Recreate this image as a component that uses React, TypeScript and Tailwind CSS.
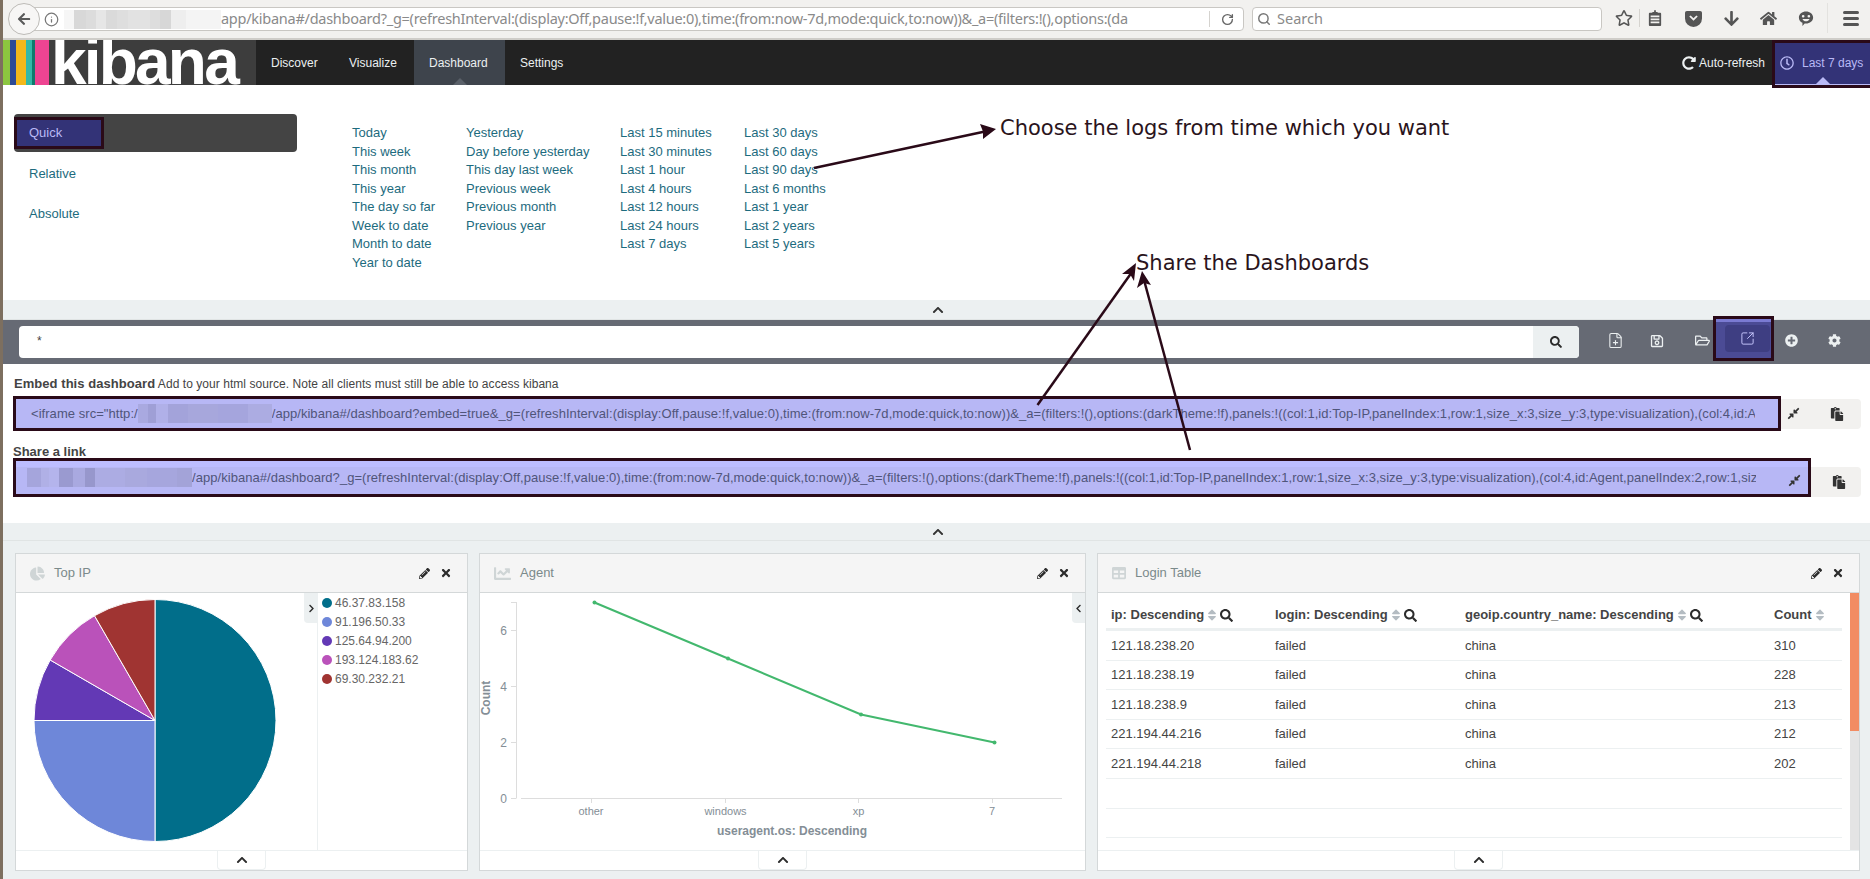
import React from "react";
import {
  FaArrowDown,
  FaArrowLeft,
  FaChartLine,
  FaChartPie,
  FaChevronLeft,
  FaChevronRight,
  FaChevronUp,
  FaCog,
  FaCompressAlt,
  FaHome,
  FaPaste,
  FaPencilAlt,
  FaPlusCircle,
  FaRedoAlt,
  FaRegClock,
  FaRegFolderOpen,
  FaRegSave,
  FaRegStar,
  FaSearch,
  FaSort,
  FaTable,
  FaTimes,
} from "react-icons/fa";
import { FilePlus, Info, RotateCw, Search, SquareArrowOutUpRight } from "lucide-react";

const timeColumns = [
  {
    width: "w-[114px]",
    items: ["Today", "This week", "This month", "This year", "The day so far", "Week to date", "Month to date", "Year to date"],
  },
  {
    width: "w-[154px]",
    items: ["Yesterday", "Day before yesterday", "This day last week", "Previous week", "Previous month", "Previous year"],
  },
  {
    width: "w-[124px]",
    items: ["Last 15 minutes", "Last 30 minutes", "Last 1 hour", "Last 4 hours", "Last 12 hours", "Last 24 hours", "Last 7 days"],
  },
  {
    width: "w-[124px]",
    items: ["Last 30 days", "Last 60 days", "Last 90 days", "Last 6 months", "Last 1 year", "Last 2 years", "Last 5 years"],
  },
];

const legend = [
  { label: "46.37.83.158", color: "bg-[#016e8a]" },
  { label: "91.196.50.33", color: "bg-[#6e87d9]" },
  { label: "125.64.94.200", color: "bg-[#6339b5]" },
  { label: "193.124.183.62", color: "bg-[#ba52ba]" },
  { label: "69.30.232.21", color: "bg-[#a03432]" },
];

const rows = [
  ["121.18.238.20", "failed", "china", "310"],
  ["121.18.238.19", "failed", "china", "228"],
  ["121.18.238.9", "failed", "china", "213"],
  ["221.194.44.216", "failed", "china", "212"],
  ["221.194.44.218", "failed", "china", "202"],
  ["", "", "", ""],
  ["", "", "", ""],
];

const columnWidths = ["w-[164px]", "w-[190px]", "w-[309px]", "w-[73px]"];

// pixelated parts of the screenshot that hide the host name
const Blur = ({ cells }: { cells: [number, string][] }) => (
  <span className="flex h-full shrink-0">
    {cells.map(([w, c], i) => (
      <span key={i} className="h-full" style={{ width: w, backgroundColor: c }} />
    ))}
  </span>
);

const ChromeBar = () => (
  <div className="relative flex h-[40px] shrink-0 items-center border-b-2 border-[#cfcdc9] bg-[#f2f1ef]">
    <div className="absolute left-[5px] top-[3px] z-10 flex h-[32px] w-[32px] items-center justify-center rounded-full border border-[#bdbbb7] bg-[#f7f6f5] text-[#5a5a5a]">
      <FaArrowLeft size={14} />
    </div>
    <div className="ml-[17px] flex h-[24px] w-[1224px] shrink-0 items-center rounded-r-sm border border-[#c9c7c3] bg-white pl-[27px] font-['Noto_Sans',sans-serif] text-[14.5px] text-[#8a8a8a]">
      <Info size={15} className="mr-[5px] shrink-0 -ml-[4px] text-[#777]" />
      <span className="flex h-[19px] items-center">
        <Blur
          cells={[
            [10, "#f6f6f6"],
            [12, "#d8d8d8"],
            [10, "#dcdcdc"],
            [10, "#e6e6e6"],
            [11, "#dadada"],
            [11, "#dedede"],
            [22, "#e2e2e2"],
            [10, "#dddddd"],
            [11, "#d7d7d7"],
            [15, "#eeeeee"],
            [35, "#f4f4f4"],
          ]}
        />
      </span>
      <span className="w-[966px] shrink-0 overflow-hidden whitespace-nowrap tracking-[-0.26px]">
        app/kibana#/dashboard?_g=(refreshInterval:(display:Off,pause:!f,value:0),time:(from:now-7d,mode:quick,to:now))&amp;_a=(filters:!(),options:(da
      </span>
      <span className="ml-[22px] h-[16px] w-px shrink-0 bg-[#d5d3cf]" />
      <RotateCw size={13} strokeWidth={2.5} className="ml-[11px] shrink-0 text-[#666]" />
    </div>
    <div className="ml-[8px] flex h-[24px] w-[350px] shrink-0 items-center rounded-sm border border-[#c9c7c3] bg-white pl-[4px] font-['Noto_Sans',sans-serif] text-[14.5px] text-[#8a8a8a]">
      <Search size={14} strokeWidth={2.5} className="text-[#777]" />
      <span className="ml-[6px]">Search</span>
    </div>
    <div className="flex h-full flex-1 items-center pb-[2px] text-[#555]">
      <FaRegStar size={18} className="ml-[13px] shrink-0" />
      <span className="ml-[6px] h-[18px] w-px bg-[#d5d3cf]" />
      <svg viewBox="0 0 16 18" className="ml-[8px] h-[16px] w-[14px] shrink-0" fill="currentColor">
        <path d="M5 2h2V0h2v2h2v1h3a1 1 0 0 1 1 1v13a1 1 0 0 1-1 1H2a1 1 0 0 1-1-1V4a1 1 0 0 1 1-1h3zM3 6v2h10V6zm0 3.500v2h10v-2zM3 13v2h10v-2z" />
      </svg>
      <svg viewBox="0 0 18 18" className="ml-[23px] h-[17px] w-[17px] shrink-0" fill="currentColor">
        <path d="M2 1h14a2 2 0 0 1 2 2v6a9 9 0 0 1-18 0V3a2 2 0 0 1 2-2zm2.500 6L9 11.500 13.500 7l-1.500-1.300L9 8.700 6 5.700z" fillRule="evenodd" />
      </svg>
      <FaArrowDown size={17} className="ml-[21px] shrink-0" />
      <FaHome size={17} className="ml-[20px] shrink-0" />
      <svg viewBox="0 0 18 18" className="ml-[21px] h-[17px] w-[16px] shrink-0" fill="currentColor">
        <path
          fillRule="evenodd"
          d="M9 1c4.400 0 8 2.900 8 6.800s-3.600 6.800-8 6.800c-.6 0-1 0-1.500-.1L5 17.500v-3.700C2.500 12.700 1 10.400 1 7.800 1 3.900 4.600 1 9 1zM5.800 5a1.500 1.500 0 1 0 0 3 1.500 1.500 0 0 0 0-3zm6.400 0a1.500 1.500 0 1 0 0 3 1.500 1.500 0 0 0 0-3zM5 9.500c.8 1.800 2.300 2.600 4 2.600s3.200-.8 4-2.600z"
        />
      </svg>
      <span className="ml-[13px] h-[30px] w-px bg-[#e3e2df]" />
      <span className="ml-[15px] flex flex-col gap-[3px]">
        <span className="h-[3px] w-[16px] rounded-sm bg-[#555]" />
        <span className="h-[3px] w-[16px] rounded-sm bg-[#555]" />
        <span className="h-[3px] w-[16px] rounded-sm bg-[#555]" />
      </span>
    </div>
  </div>
);

const NavBar = () => (
  <div className="flex h-[45px] shrink-0 bg-[#222222] text-[12px] text-[#ecf0f1]">
    <div className="flex h-full shrink-0">
      <span className="h-full w-[7px] bg-[#8cc63f]" />
      <span className="h-full w-[6px] bg-[#2e4b96]" />
      <span className="h-full w-[10px] bg-[#f3b81a]" />
      <span className="h-full w-[6px] bg-[#33b8a8]" />
      <span className="h-full w-[3px] bg-[#0f7a6c]" />
      <span className="h-full w-[14px] bg-[#ee4492]" />
      <div className="h-full w-[207px] overflow-hidden bg-[#3d3d3d] pl-[2px] text-[64px] leading-[45px] font-bold tracking-[-2.8px] text-white">
        kibana
      </div>
    </div>
    <div className="flex w-[78px] items-center pl-[15px]">Discover</div>
    <div className="flex w-[80px] items-center pl-[15px]">Visualize</div>
    <div className="relative flex w-[91px] items-center bg-[#3e444c] pl-[15px]">
      Dashboard
      <span className="absolute bottom-0 left-1/2 h-0 w-0 -translate-x-1/2 border-x-[7px] border-b-[7px] border-x-transparent border-b-[#5a6069]" />
    </div>
    <div className="flex items-center px-[15px]">Settings</div>
    <div className="ml-auto flex items-center">
      <FaRedoAlt size={14} />
      <span className="ml-[3px]">Auto-refresh</span>
    </div>
    <div className="relative z-10 ml-[7px] flex h-[48px] w-[98px] shrink-0 items-center border-[3px] border-r-0 border-[#2a0a18] bg-[#333377] pb-[3px] pl-[5px] text-[#b9b9f5]">
      <FaRegClock size={14} className="shrink-0" />
      <span className="ml-[8px] whitespace-nowrap">Last 7 days</span>
      <span className="absolute bottom-[1px] left-[41px] h-0 w-0 border-x-[7px] border-b-[7px] border-x-transparent border-b-[#b9b9f5]" />
      <span className="absolute bottom-0 left-0 right-0 h-[1px] bg-[#b9b9f5]" />
    </div>
  </div>
);

const TimePicker = () => (
  <div className="flex h-[215px] shrink-0 bg-white pl-[11px] pt-[29px] text-[13px] text-[#1d6b7e]">
    <div className="w-[283px] shrink-0">
      <div className="flex h-[38px] items-center rounded-[4px] bg-[#444444]">
        <div className="flex h-[32px] w-[90px] items-center border-[3px] border-[#2a0a18] bg-[#333377] pl-[12px] text-[#b9b9f5]">
          Quick
        </div>
      </div>
      <div className="mt-[12px] pl-[15px] leading-[20px]">Relative</div>
      <div className="mt-[20px] pl-[15px] leading-[20px]">Absolute</div>
    </div>
    <div className="ml-[55px] flex pt-[10px]">
      {timeColumns.map((col, i) => (
        <div key={i} className={col.width}>
          {col.items.map((item) => (
            <div key={item} className="h-[18.570px] whitespace-nowrap leading-[18.570px]">
              {item}
            </div>
          ))}
        </div>
      ))}
    </div>
  </div>
);

const CollapseBar = ({ height }: { height: string }) => (
  <div className={`flex ${height} shrink-0 items-center justify-center border-b border-[#e0e4e4] bg-[#ecf0f1]`}>
    <FaChevronUp size={12} className="ml-[2px] text-[#333]" />
  </div>
);

const ToolbarButton = ({ children, className }: { children: React.ReactNode; className: string }) => (
  <div className={`flex w-[20px] shrink-0 justify-center text-[#ecf0f1] ${className}`}>{children}</div>
);

const QueryBar = () => (
  <div className="relative flex h-[44px] shrink-0 items-center bg-[#666a74] pl-[16px]">
    <div className="flex h-[32px] w-[1560px] shrink-0 overflow-hidden rounded-[4px] bg-white">
      <div className="flex-1 pl-[18px] pt-[6px] text-[12px] text-[#444]">*</div>
      <div className="flex w-[46px] items-center justify-center bg-[#ecf0f1] text-[#2c2c2c]">
        <FaSearch size={12} />
      </div>
    </div>
    <div className="flex items-center pb-[3px]">
      <ToolbarButton className="ml-[26px]">
        <FilePlus size={17} strokeWidth={1.5} />
      </ToolbarButton>
      <ToolbarButton className="ml-[22px]">
        <FaRegSave size={14} />
      </ToolbarButton>
      <ToolbarButton className="ml-[25px]">
        <FaRegFolderOpen size={15} />
      </ToolbarButton>
      <ToolbarButton className="ml-[25px] text-[#b9b9f5]">
        <SquareArrowOutUpRight size={15} strokeWidth={1.5} className="text-[#c9c9ff]" />
      </ToolbarButton>
      <ToolbarButton className="ml-[24px]">
        <FaPlusCircle size={13} />
      </ToolbarButton>
      <ToolbarButton className="ml-[23px]">
        <FaCog size={13} />
      </ToolbarButton>
    </div>
    {/* highlight drawn over the share button */}
    <div className="absolute left-[1710px] top-[-4px] h-[45px] w-[61px] border-[3px] border-[#2a0a18] bg-[#4b4b95] p-[6px] pl-[9px] pr-[1px]">
      <div className="absolute left-0 right-0 top-0 h-[3px] bg-[#7a7ad2]" />
      <div className="flex h-full items-center justify-center rounded-[4px] bg-[#3e3e82]">
        <SquareArrowOutUpRight size={15} strokeWidth={1.5} className="text-[#c9c9ff]" />
      </div>
    </div>
  </div>
);

const SharePanel = () => (
  <div className="h-[159px] shrink-0 bg-white pl-[10px] text-[12px] text-[#444]">
    <div className="pl-[1px] pt-[13px] leading-[14px] tracking-[0.05px]">
      <span className="text-[13px] font-bold">Embed this dashboard</span> Add to your html source. Note all clients must still be able to access kibana
    </div>
    <div className="mt-[5px] flex h-[35px] items-center">
      <div className="flex h-[35px] w-[1768px] shrink-0 items-center overflow-hidden border-[3px] border-[#2a0a18] bg-[#b7b7f5] pl-[15px] text-[13px] tracking-[0.05px] text-[#50557a]">
        <span className="whitespace-nowrap">&lt;iframe src=&quot;http:/</span>
        <span className="flex h-[19px]">
          <Blur
            cells={[
              [10, "#a9a9e0"],
              [8, "#9f9fd6"],
              [12, "#b0b0e8"],
              [20, "#a3a3da"],
              [30, "#a7a7dc"],
              [30, "#a5a5dd"],
              [24, "#acace2"],
            ]}
          />
        </span>
        <span className="w-[1483px] shrink-0 overflow-hidden whitespace-nowrap">
          /app/kibana#/dashboard?embed=true&amp;_g=(refreshInterval:(display:Off,pause:!f,value:0),time:(from:now-7d,mode:quick,to:now))&amp;_a=(filters:!(),options:(darkTheme:!f),panels:!((col:1,id:Top-IP,panelIndex:1,row:1,size_x:3,size_y:3,type:visualization),(col:4,id:A
        </span>
      </div>
      <div className="flex h-[30px] w-[80px] shrink-0 items-center rounded-r-[4px] bg-[#f2f1ef] text-[#333]">
        <FaCompressAlt size={13} className="ml-[6px]" />
        <FaPaste size={14} className="ml-[30px]" />
      </div>
    </div>
    <div className="mt-[14px] h-[13px] text-[13px] font-bold leading-[13px]">Share a link</div>
    <div className="relative flex h-[39px] items-center">
      <div className="relative flex h-[39px] w-[1798px] shrink-0 items-center overflow-hidden border-[3px] border-[#2a0a18] bg-[#b7b7f5] pl-[11px] text-[13px] tracking-[0.05px] text-[#50557a]">
        <span className="absolute left-0 right-0 top-0 h-[6px] bg-[#bdbdff]" />
        <span className="relative flex h-[19px]">
          <Blur
            cells={[
              [14, "#a5a5dc"],
              [8, "#b0b0e6"],
              [10, "#b4b4ec"],
              [14, "#9a9ad0"],
              [12, "#a9a9e0"],
              [10, "#9797cc"],
              [30, "#acace3"],
              [22, "#a9a9de"],
              [30, "#a6a6dd"],
              [15, "#a3a3d8"],
            ]}
          />
        </span>
        <span className="relative w-[1564px] shrink-0 overflow-hidden whitespace-nowrap">
          /app/kibana#/dashboard?_g=(refreshInterval:(display:Off,pause:!f,value:0),time:(from:now-7d,mode:quick,to:now))&amp;_a=(filters:!(),options:(darkTheme:!f),panels:!((col:1,id:Top-IP,panelIndex:1,row:1,size_x:3,size_y:3,type:visualization),(col:4,id:Agent,panelIndex:2,row:1,siz
        </span>
        <FaCompressAlt size={13} className="absolute right-[7px] top-[13px] text-[#333]" />
      </div>
      <div className="mt-[9px] flex h-[30px] w-[50px] shrink-0 items-center rounded-r-[4px] bg-[#f2f1ef] text-[#333]">
        <FaPaste size={14} className="ml-[21px]" />
      </div>
    </div>
  </div>
);

const Panel = ({
  title,
  icon,
  width,
  children,
}: {
  title: string;
  icon: React.ReactNode;
  width: string;
  children: React.ReactNode;
}) => (
  <div className={`flex h-[318px] ${width} shrink-0 flex-col border border-[#d4d8d9] bg-white`}>
    <div className="flex h-[39px] shrink-0 items-center border-b border-[#d4d8d9] bg-[#f5f5f5] pr-[15px] pl-[14px] text-[13px] text-[#7b8a8b]">
      <span className="text-[#cfd5d6]">{icon}</span>
      <span className="ml-[9px]">{title}</span>
      <FaPencilAlt size={11} className="ml-auto text-[#2c2c2c]" />
      <FaTimes size={12} className="ml-[10px] text-[#2c2c2c]" />
    </div>
    <div className="h-[257px] shrink-0 overflow-hidden">{children}</div>
    <div className="flex h-[20px] shrink-0 justify-center border-t border-[#ecf0f1]">
      <div className="flex h-[19px] w-[49px] items-center justify-center rounded-b-[4px] border-x border-b border-[#ecf0f1] bg-white text-[#2c2c2c]">
        <FaChevronUp size={12} />
      </div>
    </div>
  </div>
);

const TopIp = () => (
  <div className="flex h-full">
    <svg viewBox="16 593 301 256" className="h-[256px] w-[301px] shrink-0">
      <g stroke="#fff" strokeWidth="1">
        <path d="M155 720.500 V599.500 A121 121 0 0 1 155 841.500 Z" fill="#016e8a" />
        <path d="M155 720.500 V841.500 A121 121 0 0 1 34 720.500 Z" fill="#6e87d9" />
        <path d="M155 720.500 H34 A121 121 0 0 1 50.200 660 Z" fill="#6339b5" />
        <path d="M155 720.500 L50.200 660 A121 121 0 0 1 94.500 615.700 Z" fill="#ba52ba" />
        <path d="M155 720.500 L94.500 615.700 A121 121 0 0 1 155 599.500 Z" fill="#a03432" />
      </g>
    </svg>
    <div className="relative h-full flex-1 border-l border-[#ecf0f1] pl-[4px] text-[12px] text-[#666]">
      <div className="absolute left-[-14px] top-0 flex h-[30px] w-[14px] items-center justify-center rounded-bl-[4px] bg-[#ecf0f1] text-[#2c2c2c]">
        <FaChevronRight size={9} />
      </div>
      {legend.map((l) => (
        <div key={l.label} className="flex h-[19.100px] items-center whitespace-nowrap first:mt-[-1px]">
          <span className={`h-[10px] w-[10px] shrink-0 rounded-full ${l.color}`} />
          <span className="ml-[3px]">{l.label}</span>
        </div>
      ))}
    </div>
  </div>
);

const Agent = () => (
  <div className="relative h-full">
    <svg viewBox="480 593 605 256" className="h-[256px] w-[605px]">
      <g stroke="#ddd" fill="none">
        <path d="M516.500 602 V798 M511 602.500 H516.500 M511 630.500 H516.500 M511 686.500 H516.500 M511 742.500 H516.500 M511 798.500 H516.500" />
        <path d="M521 798.500 H1062 M591.500 798 V803 M725.500 798 V803 M858.500 798 V803 M992.500 798 V803" />
      </g>
      <g fill="#848e96" fontFamily="Liberation Sans, sans-serif" fontSize="11">
        <g textAnchor="end" fontSize="12">
          <text x="507" y="635">6</text>
          <text x="507" y="691">4</text>
          <text x="507" y="747">2</text>
          <text x="507" y="803">0</text>
        </g>
        <g textAnchor="middle">
          <text x="591" y="815">other</text>
          <text x="725.500" y="815">windows</text>
          <text x="858.500" y="815">xp</text>
          <text x="992" y="815">7</text>
        </g>
      </g>
      <g fill="#848e96" fontFamily="Liberation Sans, sans-serif" fontSize="12" fontWeight="bold" textAnchor="middle">
        <text x="792" y="835">useragent.os: Descending</text>
        <text transform="translate(490 698) rotate(-90)">Count</text>
      </g>
      <polyline points="594.500,602.500 728,658.500 861,714.500 994.500,742.500" fill="none" stroke="#43b86e" strokeWidth="2" />
      <g fill="#43b86e">
        <circle cx="594.500" cy="602.500" r="2" />
        <circle cx="728" cy="658.500" r="2" />
        <circle cx="861" cy="714.500" r="2" />
        <circle cx="994.500" cy="742.500" r="2" />
      </g>
    </svg>
    <div className="absolute right-0 top-0 flex h-[30px] w-[13px] items-center justify-center rounded-bl-[4px] bg-[#ecf0f1] text-[#2c2c2c]">
      <FaChevronLeft size={9} />
    </div>
  </div>
);

const headers = ["ip: Descending", "login: Descending", "geoip.country_name: Descending"];

const LoginTable = () => (
  <div className="relative h-full pl-[8px] text-[13px] text-[#444]">
    <div className="w-[736px]">
      <div className="flex h-[38px] items-center border-b-[3px] border-[#ecf0f1] pt-[9px] font-bold">
        {headers.map((h, i) => (
          <div key={h} className={`flex ${columnWidths[i]} items-center pl-[5px] whitespace-nowrap`}>
            {h}
            <FaSort size={14} className="ml-[1px] text-[#b4bcc2]" />
            <FaSearch size={13} className="ml-[1px] text-[#2c2c2c]" />
          </div>
        ))}
        <div className={`flex ${columnWidths[3]} items-center pl-[5px]`}>
          Count
          <FaSort size={14} className="ml-[1px] text-[#b4bcc2]" />
        </div>
      </div>
      {rows.map((r, i) => (
        <div key={i} className="flex h-[29.600px] items-center border-b border-[#ecf0f1] whitespace-nowrap">
          {r.map((c, j) => (
            <div key={j} className={`${columnWidths[j]} pl-[5px]`}>
              {c}
            </div>
          ))}
        </div>
      ))}
    </div>
    <div className="absolute right-0 top-0 h-full w-[9px] bg-[#e4e4e4]">
      <div className="h-[138px] w-full bg-[#f28c63]" />
    </div>
  </div>
);

const Annotations = () => (
  <>
    <svg className="pointer-events-none absolute inset-0 z-20 h-[879px] w-[1870px]" viewBox="0 0 1870 879">
      <g stroke="#2a0a18" strokeWidth="2.500" fill="#2a0a18">
        <line x1="814" y1="168" x2="985" y2="131.500" />
        <polygon points="996,129 980,124 983,131.500 983,139" stroke="none" />
        <line x1="1037.500" y1="405" x2="1132" y2="272" strokeWidth="2.500" />
        <polygon points="1136,263 1122,274 1130,274 1134,281" stroke="none" />
        <line x1="1190" y1="450" x2="1144" y2="280" strokeWidth="2.500" />
        <polygon points="1142,271 1137,288 1144,283 1151,285" stroke="none" />
      </g>
    </svg>
    <div className="absolute left-[1000px] top-[113px] z-20 whitespace-nowrap font-['DejaVu_Sans',sans-serif] text-[21px] leading-[30px] text-[#2a141c]">
      Choose the logs from time which you want
    </div>
    <div className="absolute left-[1136px] top-[248px] z-20 whitespace-nowrap font-['DejaVu_Sans',sans-serif] text-[21px] leading-[30px] text-[#2a141c]">
      Share the Dashboards
    </div>
  </>
);

export default function App() {
  return (
    <div className="relative flex h-[879px] w-[1870px] overflow-hidden bg-[#ecf0f1] font-['Liberation_Sans',sans-serif]">
      <div className="h-full w-[3px] shrink-0 bg-[#7d6f5f]" />
      <div className="flex h-full w-[1867px] flex-col">
        <ChromeBar />
        <NavBar />
        <TimePicker />
        <CollapseBar height="h-[20px]" />
        <QueryBar />
        <SharePanel />
        <CollapseBar height="h-[18px]" />
        <div className="flex gap-[11px] pl-[12px] pt-[12px]">
          <Panel title="Top IP" width="w-[453px]" icon={<FaChartPie size={15} />}>
            <TopIp />
          </Panel>
          <Panel title="Agent" width="w-[607px]" icon={<FaChartLine size={17} />}>
            <Agent />
          </Panel>
          <Panel title="Login Table" width="w-[763px]" icon={<FaTable size={14} />}>
            <LoginTable />
          </Panel>
        </div>
      </div>
      <Annotations />
    </div>
  );
}
